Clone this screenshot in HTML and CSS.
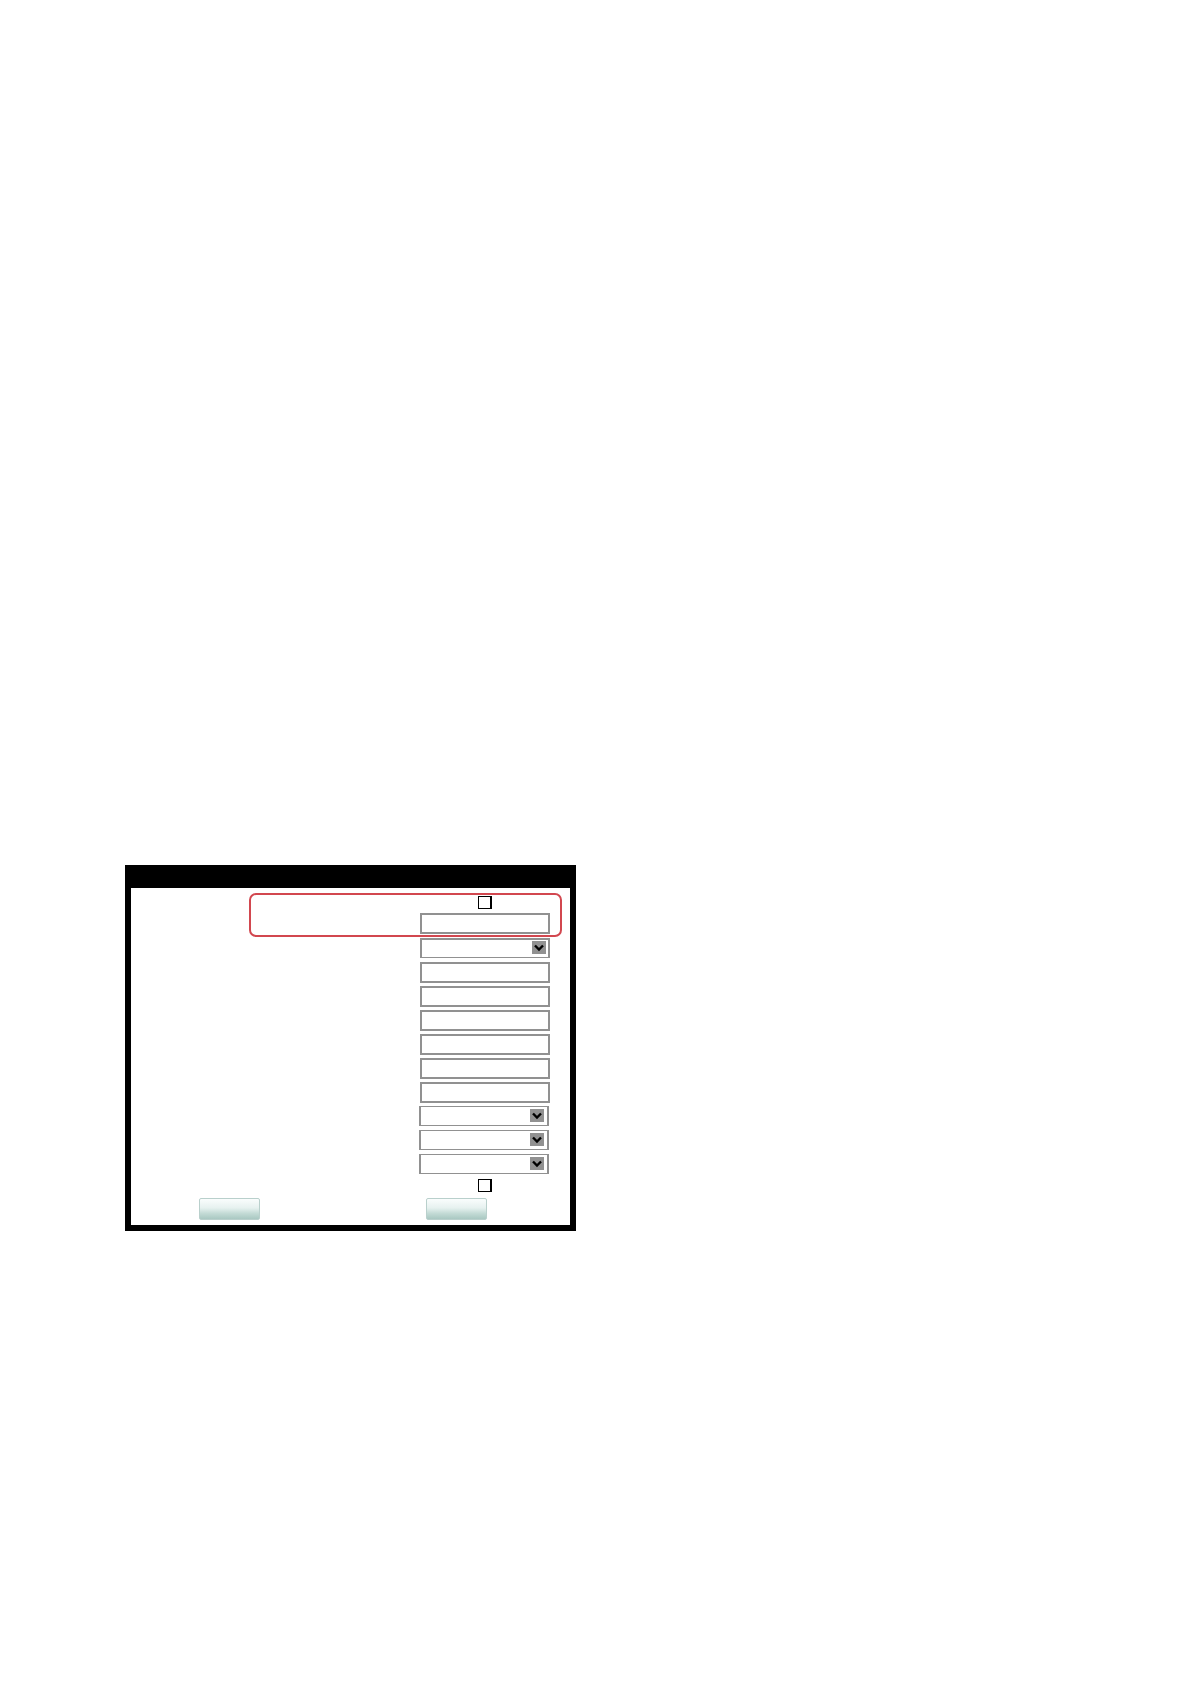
FILE: index.html
```html
<!DOCTYPE html>
<html lang="en">
<head>
  <meta charset="UTF-8">
  <meta name="viewport" content="width=device-width, initial-scale=1.0">
  <title>Settings</title>
  <link rel="stylesheet" href="styles.css">
</head>
<body>
  <svg class="defs" width="0" height="0">
    <symbol id="arrow" viewBox="0 0 14 13">
      <rect width="14" height="13" fill="#919191"/>
      <path d="M3 4.5 L7 8.5 L11 4.5" fill="none" stroke="#000" stroke-width="2.4"/>
    </symbol>
  </svg>

  <form class="panel">
    <div class="highlight">
      <input class="check" type="checkbox" aria-label="Option 1">
      <input class="field" type="text" aria-label="Field 1">
    </div>

    <div class="rows">
      <div class="row">
        <div class="dropdown">
          <select class="first" aria-label="List 1"></select>
          <svg class="arrow"><use href="#arrow"/></svg>
        </div>
      </div>
      <div class="row"><input class="field" type="text" aria-label="Field 2"></div>
      <div class="row"><input class="field" type="text" aria-label="Field 3"></div>
      <div class="row"><input class="field" type="text" aria-label="Field 4"></div>
      <div class="row"><input class="field" type="text" aria-label="Field 5"></div>
      <div class="row"><input class="field" type="text" aria-label="Field 6"></div>
      <div class="row"><input class="field" type="text" aria-label="Field 7"></div>
      <div class="row lower">
        <div class="dropdown">
          <select aria-label="List 2"></select>
          <svg class="arrow"><use href="#arrow"/></svg>
        </div>
      </div>
      <div class="row lower">
        <div class="dropdown">
          <select aria-label="List 3"></select>
          <svg class="arrow"><use href="#arrow"/></svg>
        </div>
      </div>
      <div class="row lower">
        <div class="dropdown">
          <select aria-label="List 4"></select>
          <svg class="arrow"><use href="#arrow"/></svg>
        </div>
      </div>
      <div class="row last"><input class="check" type="checkbox" aria-label="Option 2"></div>
    </div>

    <div class="buttons">
      <button type="button" aria-label="Button 1"></button>
      <button type="button" aria-label="Button 2"></button>
    </div>
  </form>
</body>
</html>
```

FILE: styles.css
```css
* {
  box-sizing: border-box;
}

body {
  margin: 0;
  padding: 865px 125px 40px;
  background-color: #fff;
  font-family: "Liberation Sans", Arial, sans-serif;
}

.defs {
  position: absolute;
}

.panel {
  width: 100%;
  max-width: 451px;
  border: 6px solid #000;
  border-top-width: 23px;
  padding: 5px 0;
}

.highlight {
  display: flex;
  flex-direction: column;
  align-items: flex-end;
  gap: 4px;
  margin: 0 8px 0 118px;
  padding: 1px 10px;
  border: 2px solid #d2474f;
  border-radius: 7px;
}

.rows {
  padding: 1px 20px 0;
}

.row {
  display: flex;
  justify-content: flex-end;
  height: 24px;
}

.row.lower {
  margin-right: 1px;
}

.row.last {
  height: 20px;
  padding-top: 1px;
}

.field,
select {
  width: 130px;
  margin: 0;
  padding: 0 4px;
  font: 12px "Liberation Sans", Arial, sans-serif;
  background-color: #fff;
  border: 2px solid #919191;
  border-radius: 0;
}

.field {
  height: 21px;
}

.dropdown {
  position: relative;
  height: 20px;
}

select {
  display: block;
  height: 20px;
  border-width: 1px 2px;
  appearance: none;
}

select.first {
  border-top-width: 2px;
}

.arrow {
  position: absolute;
  top: 3px;
  right: 4px;
  width: 14px;
  height: 13px;
  pointer-events: none;
}

.lower .arrow {
  right: 5px;
}

.check {
  width: 14px;
  height: 13px;
  margin: 0 58px 0 0;
  background-color: #fff;
  border: 1px solid #000;
  border-right-width: 2px;
  appearance: none;
}

.buttons {
  display: flex;
  gap: 166px;
  padding-left: 68px;
}

button {
  width: 61px;
  height: 22px;
  padding: 0;
  border: 1px solid #b9d0cc;
  border-radius: 2px;
  background: linear-gradient(#fafdfd, #e6f1ef 45%, #c5dcd7 70%, #a9c8c2);
}
```
